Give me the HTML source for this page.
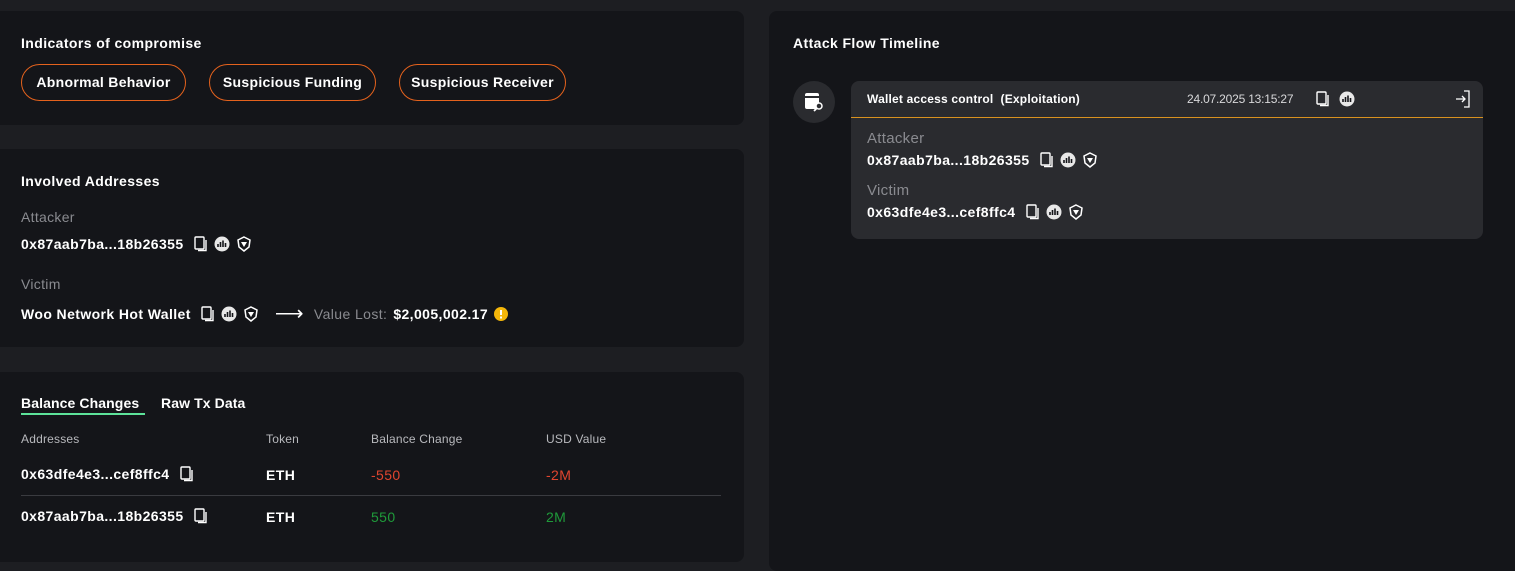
<!DOCTYPE html>
<html><head><meta charset="utf-8"><style>
*{box-sizing:border-box;margin:0;padding:0}
body{width:1515px;height:559px;background:#1d1e22;font-family:"Liberation Sans",sans-serif;color:#fff;position:relative;overflow:hidden}
.card{position:absolute;background:#141519;border-radius:8px}
.h{font-size:14px;font-weight:bold;position:absolute;letter-spacing:0.4px}
.pill{position:absolute;top:64px;height:37px;border:1px solid #e4621d;border-radius:19px;font-size:14px;font-weight:bold;line-height:35px;text-align:center;letter-spacing:0.3px}
.lbl{position:absolute;font-size:14px;color:#8a8b90;letter-spacing:0.3px}
.addr{position:absolute;font-size:14px;font-weight:bold;display:flex;align-items:center;gap:6px;letter-spacing:0.4px;white-space:nowrap}
.th{position:absolute;top:432px;font-size:12px;color:#b8b9bd;letter-spacing:0.2px}
.td{position:absolute;font-size:14px;font-weight:bold;letter-spacing:0.4px}
</style></head><body>
<svg width="0" height="0" style="position:absolute"><defs>
<symbol id="cp" viewBox="0 0 14 16"><rect x="1" y="1" width="9" height="12" rx="1" fill="none" stroke="#fff" stroke-width="1.4"/><path d="M4 14.5h8V4" fill="none" stroke="#fff" stroke-width="1.4"/></symbol>
<symbol id="ch" viewBox="0 0 16 16"><circle cx="8" cy="8" r="7.5" fill="#e8e8e8"/><path d="M4 11V8M6.5 11V6M9 11V4.5M11.5 11V7" stroke="#141519" stroke-width="1.6"/></symbol>
<symbol id="sh" viewBox="0 0 16 16"><path d="M8 1l6 3-1 7-5 4-5-4-1-7z" fill="none" stroke="#fff" stroke-width="1.5"/><path d="M5 6h6l-3 5z" fill="#fff"/></symbol>
</defs></svg>

<div class="card" style="left:-10px;top:11px;width:754px;height:114px"></div>
<div class="h" style="left:21px;top:35px">Indicators of compromise</div>
<div class="pill" style="left:21px;width:165px">Abnormal Behavior</div>
<div class="pill" style="left:209px;width:167px">Suspicious Funding</div>
<div class="pill" style="left:399px;width:167px">Suspicious Receiver</div>

<div class="card" style="left:-10px;top:149px;width:754px;height:198px"></div>
<div class="h" style="left:21px;top:173px">Involved Addresses</div>
<div class="lbl" style="left:21px;top:209px">Attacker</div>
<div class="addr" style="left:21px;top:236px">0x87aab7ba...18b26355 <svg width="14" height="16" style="margin-left:4px"><use href="#cp"/></svg><svg width="16" height="16"><use href="#ch"/></svg><svg width="16" height="16"><use href="#sh"/></svg></div>
<div class="lbl" style="left:21px;top:276px">Victim</div>
<div class="addr" style="left:21px;top:301px">Woo Network Hot Wallet <svg width="14" height="16" style="margin-left:4px"><use href="#cp"/></svg><svg width="16" height="16"><use href="#ch"/></svg><svg width="16" height="16"><use href="#sh"/></svg><span style="font-size:20px;margin:0 4px 0 10px;font-weight:normal">⟶</span><span style="color:#8a8b90;font-weight:normal">Value Lost:</span> $2,005,002.17 <svg width="14" height="14"><circle cx="7" cy="7" r="7" fill="#f5b70a"/><rect x="6" y="3" width="2" height="5" fill="#fff"/><rect x="6" y="9.5" width="2" height="2" fill="#fff"/></svg></div>

<div class="card" style="left:-10px;top:372px;width:754px;height:190px"></div>
<div class="h" style="left:21px;top:395px;letter-spacing:0.1px">Balance Changes</div>
<div style="position:absolute;left:21px;top:413px;width:124px;height:2px;background:#5de39a"></div>
<div class="h" style="left:161px;top:395px;letter-spacing:0.1px">Raw Tx Data</div>
<div class="th" style="left:21px">Addresses</div>
<div class="th" style="left:266px">Token</div>
<div class="th" style="left:371px">Balance Change</div>
<div class="th" style="left:546px">USD Value</div>
<div class="addr" style="left:21px;top:466px">0x63dfe4e3...cef8ffc4 <svg width="14" height="16" style="margin-left:4px"><use href="#cp"/></svg></div>
<div class="td" style="left:266px;top:467px">ETH</div>
<div class="td" style="left:371px;top:467px;color:#e0452f;font-weight:normal">-550</div>
<div class="td" style="left:546px;top:467px;color:#e0452f;font-weight:normal">-2M</div>
<div style="position:absolute;left:21px;top:495px;width:700px;height:1px;background:#3a3b40"></div>
<div class="addr" style="left:21px;top:508px">0x87aab7ba...18b26355 <svg width="14" height="16" style="margin-left:4px"><use href="#cp"/></svg></div>
<div class="td" style="left:266px;top:509px">ETH</div>
<div class="td" style="left:371px;top:509px;color:#1f9a3a;font-weight:normal">550</div>
<div class="td" style="left:546px;top:509px;color:#1f9a3a;font-weight:normal">2M</div>

<div class="card" style="left:769px;top:11px;width:760px;height:560px"></div>
<div class="h" style="left:793px;top:35px">Attack Flow Timeline</div>
<div style="position:absolute;left:793px;top:81px;width:42px;height:42px;border-radius:50%;background:#2a2b2f"></div>
<svg style="position:absolute;left:803px;top:91px" width="22" height="22" viewBox="0 0 22 22"><rect x="2" y="2" width="14" height="16" rx="2" fill="#fff"/><rect x="2" y="5" width="14" height="2" fill="#2a2b2f"/><circle cx="16" cy="15" r="3" fill="#2a2b2f" stroke="#fff" stroke-width="1.5"/><path d="M14 17l-3 3" stroke="#fff" stroke-width="1.8"/></svg>
<div style="position:absolute;left:851px;top:81px;width:632px;height:158px;background:#2a2b2f;border-radius:8px"></div>
<div style="position:absolute;left:851px;top:117px;width:632px;height:1px;background:#d9921f"></div>
<div style="position:absolute;left:867px;top:92px;font-size:12px;font-weight:bold;letter-spacing:0.2px">Wallet access control&nbsp; (Exploitation)</div>
<div style="position:absolute;left:1187px;top:92px;font-size:12px;color:#d8d8da;letter-spacing:-0.2px">24.07.2025 13:15:27</div>
<svg style="position:absolute;left:1316px;top:91px" width="14" height="16"><use href="#cp"/></svg>
<svg style="position:absolute;left:1339px;top:91px" width="16" height="16"><use href="#ch"/></svg>
<svg style="position:absolute;left:1455px;top:90px" width="16" height="18" viewBox="0 0 16 18"><path d="M9 1h5v16H9" fill="none" stroke="#fff" stroke-width="1.3"/><path d="M1 9h9M7 6l3 3-3 3" fill="none" stroke="#fff" stroke-width="1.3"/></svg>
<div class="lbl" style="left:867px;top:130px;font-size:15px">Attacker</div>
<div class="addr" style="left:867px;top:152px">0x87aab7ba...18b26355 <svg width="14" height="16" style="margin-left:4px"><use href="#cp"/></svg><svg width="16" height="16"><use href="#ch"/></svg><svg width="16" height="16"><use href="#sh"/></svg></div>
<div class="lbl" style="left:867px;top:182px;font-size:15px">Victim</div>
<div class="addr" style="left:867px;top:204px">0x63dfe4e3...cef8ffc4 <svg width="14" height="16" style="margin-left:4px"><use href="#cp"/></svg><svg width="16" height="16"><use href="#ch"/></svg><svg width="16" height="16"><use href="#sh"/></svg></div>
</body></html>
